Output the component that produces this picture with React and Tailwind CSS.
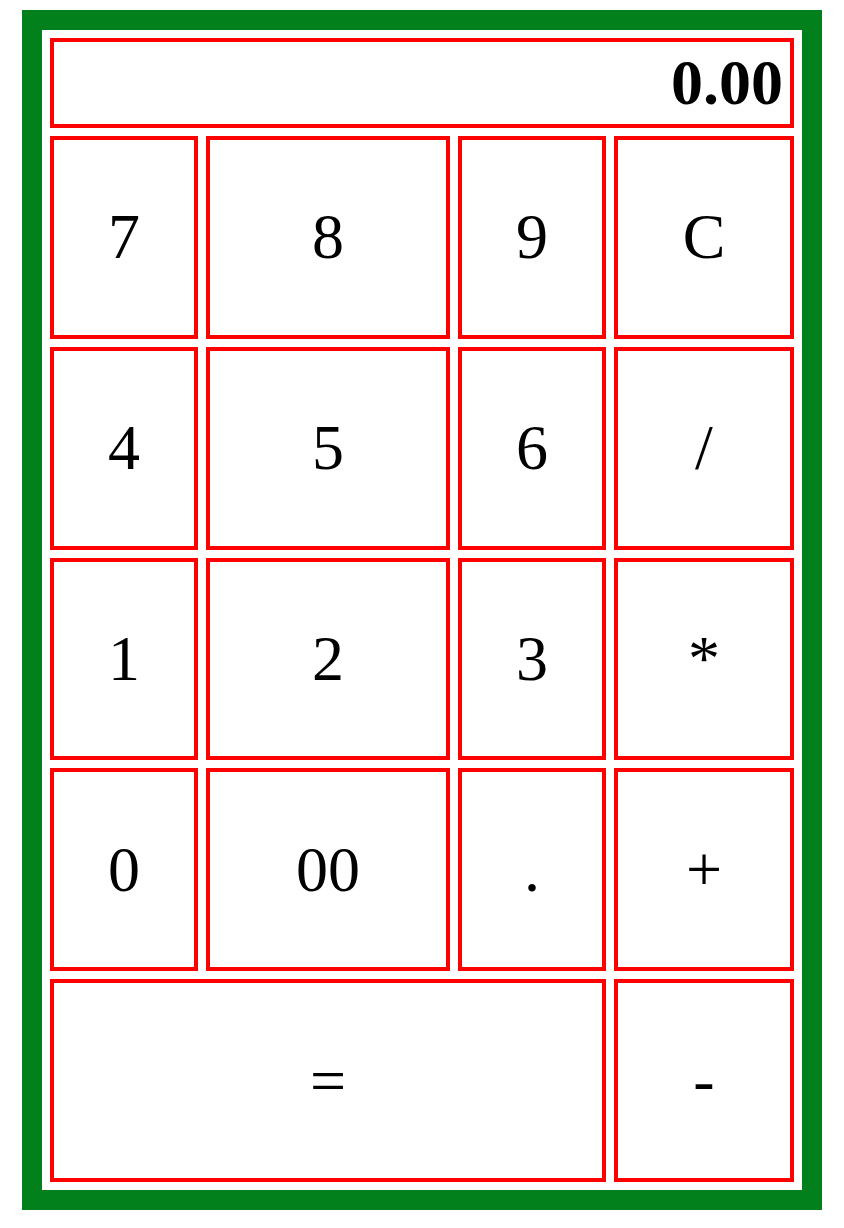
import React, { useState } from "react";

const keys = [
  { label: "7" },
  { label: "8" },
  { label: "9" },
  { label: "C" },
  { label: "4" },
  { label: "5" },
  { label: "6" },
  { label: "/" },
  { label: "1" },
  { label: "2" },
  { label: "3" },
  { label: "*" },
  { label: "0" },
  { label: "00" },
  { label: "." },
  { label: "+" },
  { label: "=", wide: true },
  { label: "-" },
];

const App = () => {
  const [display] = useState("0.00");

  return (
    <div className="w-[844px] h-[1228px] bg-white pt-[10px] pl-[22px]">
      <div
        className="w-[800px] h-[1200px] border-[20px] border-[#02801c] bg-white p-2 flex flex-col gap-2"
        style={{ fontFamily: '"Liberation Serif", "Times New Roman", serif' }}
      >
        {/* Display */}
        <div className="h-[90px] border-4 border-[#ff0000] flex items-center justify-end pr-[7px] text-[64px] font-bold text-black leading-none">
          {display}
        </div>

        {/* Keypad */}
        <div className="flex-1 grid grid-cols-[148px_244px_148px_180px] grid-rows-5 gap-2">
          {keys.map((k) => (
            <button
              key={k.label}
              className={`border-4 border-[#ff0000] bg-white flex items-center justify-center text-[64px] text-black leading-none ${
                k.wide ? "col-span-3" : ""
              }`}
            >
              {k.label}
            </button>
          ))}
        </div>
      </div>
    </div>
  );
};

export default App;
